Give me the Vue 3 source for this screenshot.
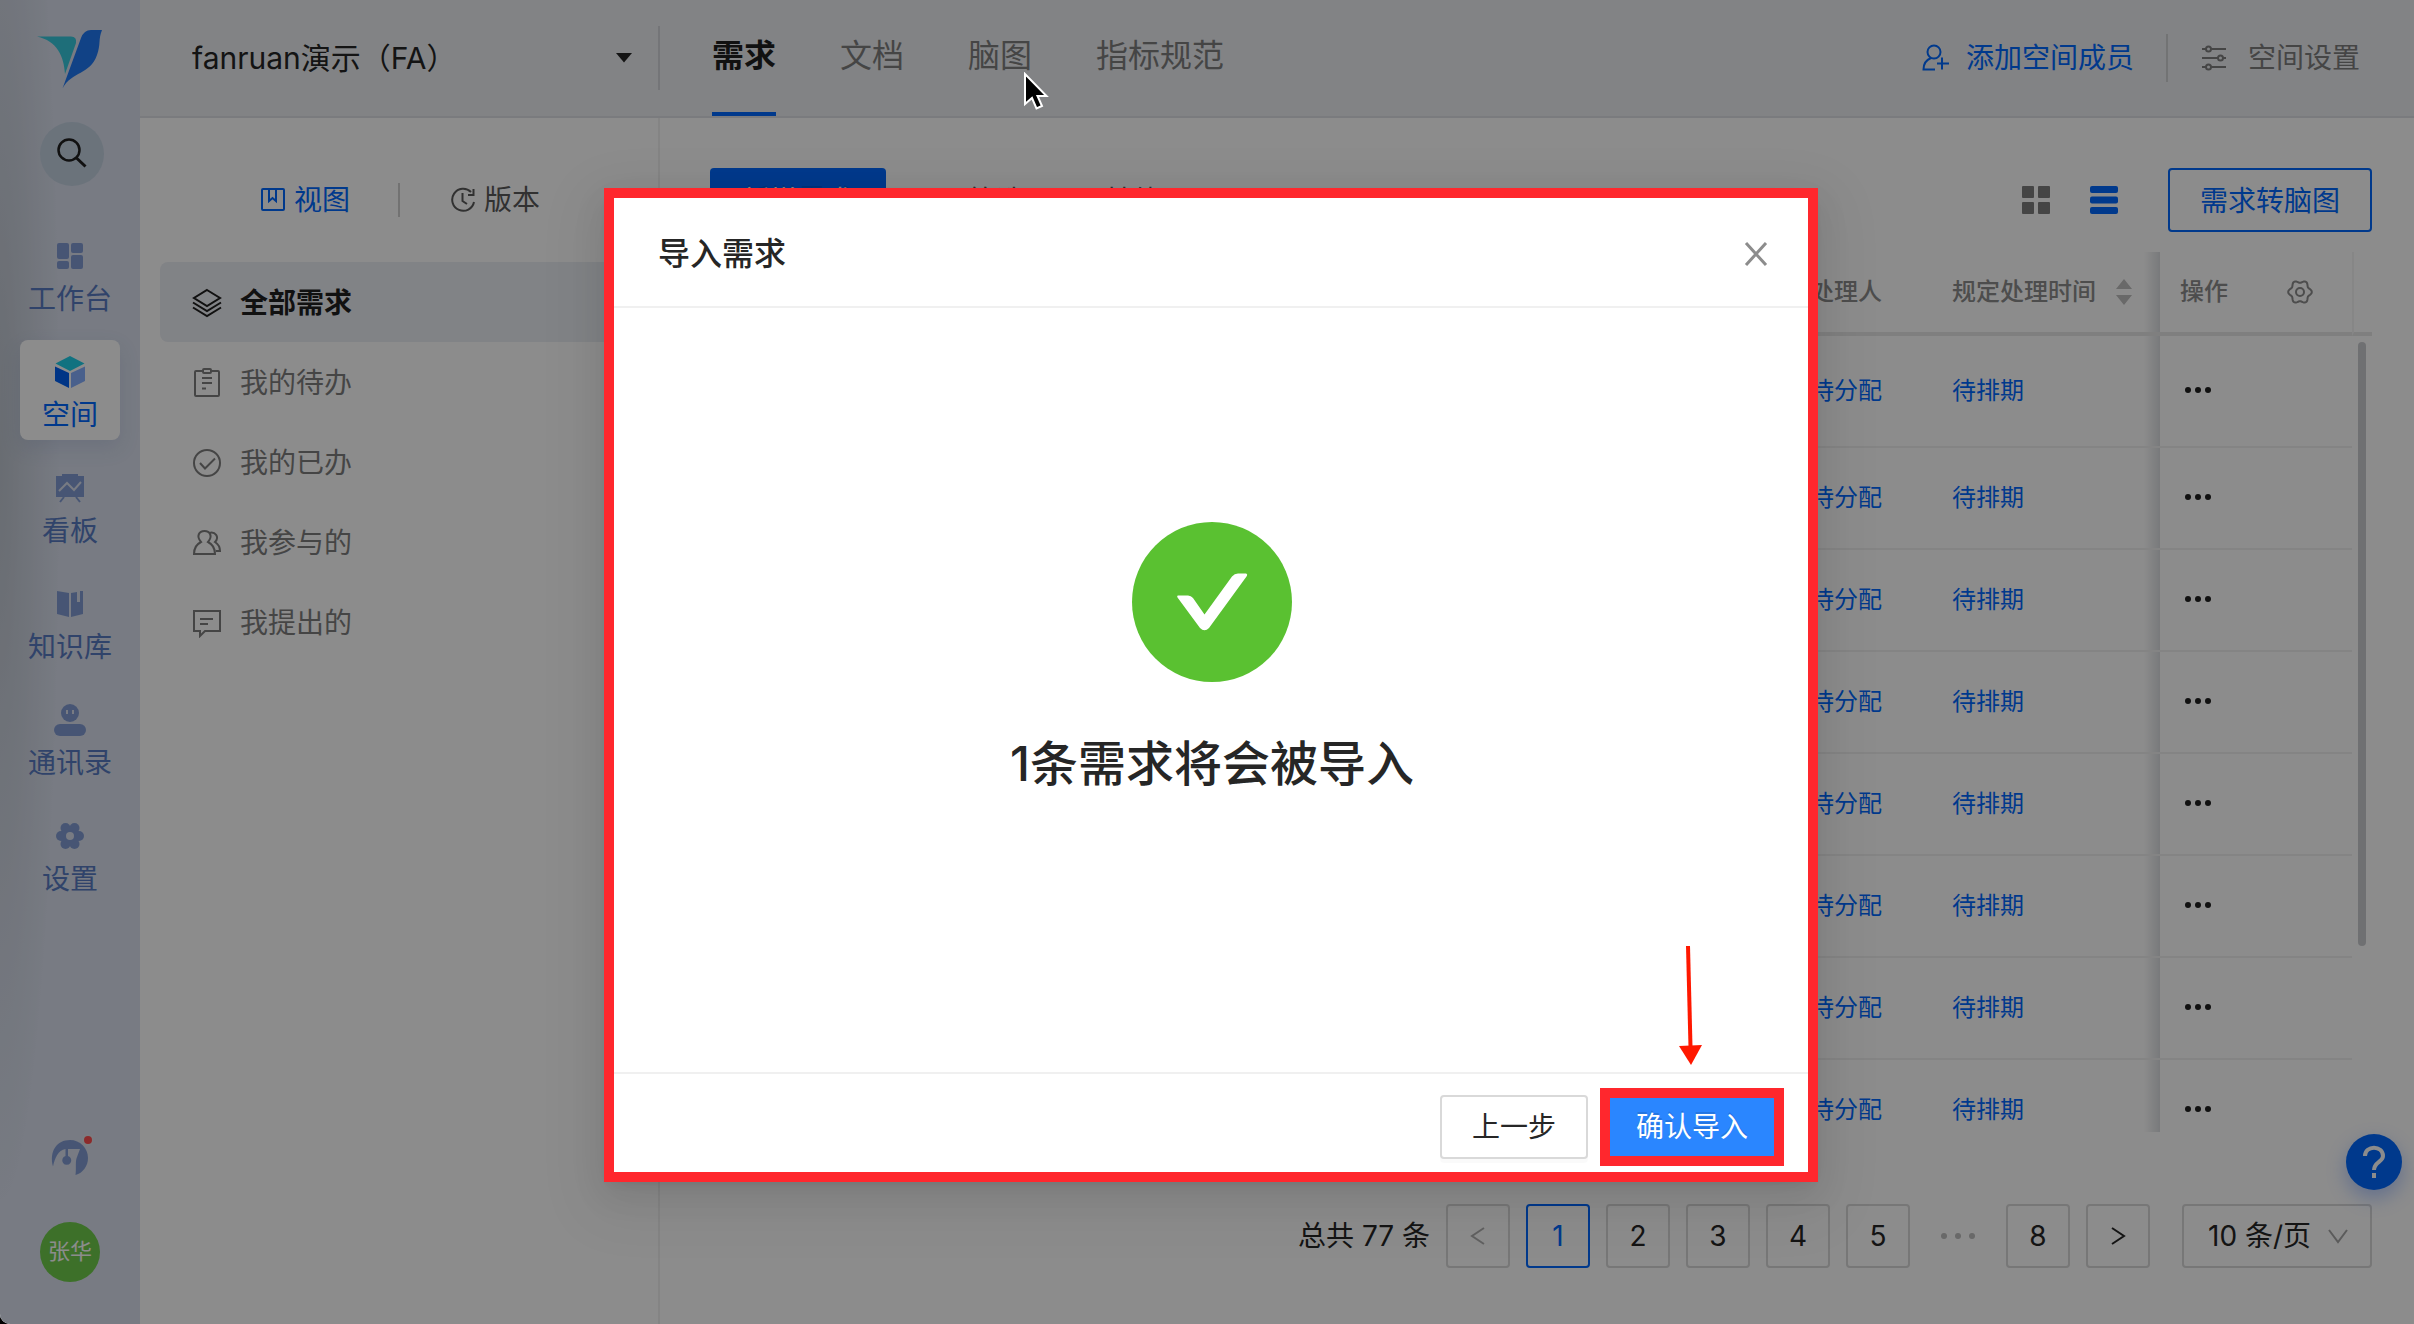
<template>
  <div class="app">
    <aside class="sidebar">
      <a href="#" class="logo" aria-label="首页">
        <svg width="66" height="60" viewBox="0 0 66 60">
          <path d="M0 6.5H34Q40 6.5 39 13L28 44C27 26 20 11 0 6.5Z" fill="#37c8dc" />
          <path d="M65 0C61 10 64 14 60 25C53 45 35 41 25.500 58.500L44 8Q47 0 54 0Z" fill="#1f78f4" />
        </svg>
      </a>
      <button class="search" aria-label="搜索">
        <svg width="32" height="32" viewBox="0 0 32 32" fill="none" stroke="#1f1f1f">
          <circle cx="13" cy="12" r="10.500" stroke-width="2.500" />
          <path d="M20 19.500L29.500 28.500" stroke-width="3" />
        </svg>
      </button>

      <nav class="side-nav">
        <a v-for="item in sideItems" :key="item.label" href="#" class="side-item" :class="{ active: item.active }">
          <svg width="32" height="32" viewBox="0 0 32 32" v-html="item.icon"></svg>
          <span>{{ item.label }}</span>
        </a>
      </nav>

      <div class="side-footer">
        <button class="assistant" aria-label="助手">
          <svg width="46" height="46" viewBox="0 0 46 46">
            <path d="M6 32.500C2 17 10 6 23 6C33 6 41 14 41 24C41 32 36 39 28.500 41C29.500 34 28 27 30 23L33 15H21V22A4.500 4.500 0 1 1 18.500 22V15C11 16 8 24 6 32.500Z" fill="#829cd4" />
            <circle cx="41" cy="6" r="6" fill="#dfe3ec" />
            <circle cx="41" cy="6" r="4" fill="#ff4d4f" />
          </svg>
        </button>
        <div class="avatar">张华</div>
      </div>
    </aside>

    <div class="workspace">
      <header class="top-bar">
        <div class="space-picker">
          <select v-model="space" aria-label="空间">
            <option>fanruan演示（FA）</option>
          </select>
          <svg width="16" height="10" viewBox="0 0 16 10"><path d="M0 0H16L8 9.500Z" fill="#262626" /></svg>
        </div>
        <nav class="tabs">
          <a v-for="tab in tabs" :key="tab" href="#" class="tab" :class="{ active: tab === activeTab }">{{ tab }}</a>
        </nav>
        <div class="top-actions">
          <a href="#" class="top-link primary">
            <svg width="28" height="28" viewBox="0 0 28 28" fill="none" stroke="currentColor" stroke-width="2">
              <circle cx="12" cy="8" r="6.500" />
              <path d="M9 14C4 16 1.500 20 1.500 25.500H13M20 13.500V25.500M15 19.500H27" />
            </svg>
            添加空间成员
          </a>
          <a href="#" class="top-link">
            <svg width="28" height="28" viewBox="0 0 28 28" fill="none" stroke="currentColor" stroke-width="2">
              <path d="M2 5H6M11 5H26M2 14H18M23 14H26M2 23H6M11 23H26" />
              <circle cx="8.500" cy="5" r="2.500" />
              <circle cx="20.500" cy="14" r="2.500" />
              <circle cx="8.500" cy="23" r="2.500" />
            </svg>
            空间设置
          </a>
        </div>
      </header>

      <div class="body">
        <section class="panel">
          <div class="panel-tabs">
            <button class="panel-tab active">
              <svg width="26" height="26" viewBox="0 0 26 26" fill="none" stroke="currentColor" stroke-width="2">
                <rect x="2" y="2" width="22" height="21" rx="1" />
                <path d="M9 2V14L12.500 11L16 14V2" />
              </svg>
              视图
            </button>
            <button class="panel-tab">
              <svg width="26" height="26" viewBox="0 0 26 26" fill="none" stroke="currentColor" stroke-width="2">
                <path d="M21 5A11 11 0 1 0 24 15M23.500 2V8H18M12.500 6V14L17 17" />
              </svg>
              版本
            </button>
          </div>
          <ul class="menu">
            <li v-for="item in menuItems" :key="item.label">
              <a href="#" class="menu-item" :class="{ active: item.active }">
                <svg width="30" height="30" viewBox="0 0 30 30" fill="none" stroke="currentColor" stroke-width="2" v-html="item.icon"></svg>
                {{ item.label }}
              </a>
            </li>
          </ul>
        </section>

        <main class="main">
          <div class="toolbar">
            <button class="btn btn-primary">新增需求</button>
            <button class="tool">
              <svg width="28" height="28" viewBox="0 0 28 28" fill="none" stroke="currentColor" stroke-width="3">
                <path d="M2 2.500H26L17 13V25L11 21V13Z" />
              </svg>
              筛选
            </button>
            <button class="tool tool-other">其他</button>
            <div class="toolbar-right">
              <button class="view-btn" aria-label="卡片视图">
                <svg width="28" height="28" viewBox="0 0 28 28" fill="currentColor">
                  <rect width="12" height="12" rx="1" /><rect x="16" width="12" height="12" rx="1" />
                  <rect y="16" width="12" height="12" rx="1" /><rect x="16" y="16" width="12" height="12" rx="1" />
                </svg>
              </button>
              <button class="view-btn active" aria-label="列表视图">
                <svg width="28" height="28" viewBox="0 0 28 28" fill="currentColor">
                  <rect width="28" height="7" rx="2" /><rect y="10.500" width="28" height="7" rx="2" /><rect y="21" width="28" height="7" rx="2" />
                </svg>
              </button>
              <button class="btn btn-outline">需求转脑图</button>
            </div>
          </div>

          <div class="table-wrap">
            <table class="table">
              <colgroup>
                <col /><col class="col-user" /><col class="col-time" /><col class="col-op" /><col class="col-gutter" />
              </colgroup>
              <thead>
                <tr>
                  <th></th>
                  <th>处理人</th>
                  <th>
                    <div class="th-sort">
                      规定处理时间
                      <svg width="16" height="26" viewBox="0 0 16 26" fill="#bfbfbf"><path d="M0 10L8 0L16 10ZM0 16H16L8 26Z" /></svg>
                    </div>
                  </th>
                  <th class="op">
                    <div class="th-op">
                      操作
                      <svg width="28" height="28" viewBox="-14 -14 28 28" fill="none" stroke="currentColor" stroke-width="2">
                        <path :d="gear" />
                        <circle r="4" />
                      </svg>
                    </div>
                  </th>
                  <th class="gutter"></th>
                </tr>
              </thead>
              <tbody>
                <tr v-for="row in rows" :key="row.id">
                  <td></td>
                  <td><a href="#">{{ row.assignee }}</a></td>
                  <td><a href="#">{{ row.schedule }}</a></td>
                  <td class="op">
                    <button class="more" aria-label="更多">
                      <svg width="28" height="8" viewBox="0 0 28 8"><circle cx="4" cy="4" r="3" /><circle cx="14" cy="4" r="3" /><circle cx="24" cy="4" r="3" /></svg>
                    </button>
                  </td>
                  <td class="gutter"></td>
                </tr>
              </tbody>
            </table>
            <div class="scroll-thumb"></div>
          </div>

          <div class="pagination">
            <span>总共 77 条</span>
            <button class="page disabled" aria-label="上一页">
              <svg width="20" height="20" viewBox="0 0 20 20"><path d="M16 2L4 10L16 18" /></svg>
            </button>
            <button v-for="n in 5" :key="n" class="page" :class="{ current: n === page }" @click="page = n">{{ n }}</button>
            <span class="ellipsis">
              <svg width="36" height="8" viewBox="0 0 36 8"><circle cx="4" cy="4" r="3" /><circle cx="18" cy="4" r="3" /><circle cx="32" cy="4" r="3" /></svg>
            </span>
            <button class="page" @click="page = 8">8</button>
            <button class="page" aria-label="下一页">
              <svg width="20" height="20" viewBox="0 0 20 20"><path d="M4 2L16 10L4 18" /></svg>
            </button>
            <div class="page-size">
              <select v-model="pageSize" aria-label="每页条数">
                <option>10 条/页</option>
              </select>
              <svg width="20" height="16" viewBox="0 0 20 16"><path d="M1 2L10 14L19 2" /></svg>
            </div>
          </div>
        </main>
      </div>
    </div>

    <button class="help" aria-label="帮助">
      <svg width="32" height="36" viewBox="0 0 32 36" fill="none" stroke="#fff" stroke-width="4">
        <path d="M7 12C7 1 25 1 25 12C25 18 16 18 16 26" />
        <path d="M16 29V34" />
      </svg>
    </button>

    <div class="mask">
      <div class="modal" role="dialog" aria-labelledby="modal-title">
        <div class="modal-header">
          <h2 id="modal-title">导入需求</h2>
          <button class="close" aria-label="关闭">
            <svg width="24" height="24" viewBox="0 0 24 24"><path d="M2 1L22 23M22 1L2 23" stroke="#8c8c8c" stroke-width="3" /></svg>
          </button>
        </div>
        <div class="modal-body">
          <svg width="160" height="160" viewBox="0 0 160 160">
            <circle cx="80" cy="80" r="80" fill="#5ac131" />
            <path d="M46 73.500H56Q59 73.500 61 76L72.500 92.500L100 54.500Q102.500 51.500 106 51.500H114Q116 52 114.500 54.500L77 106Q72.500 110.500 68 106L45.500 75.500Q44.500 73.500 46 73.500Z" fill="#fff" />
          </svg>
          <p class="result">{{ count }}条需求将会被导入</p>
        </div>
        <div class="modal-footer">
          <button class="btn btn-default">上一步</button>
          <div class="confirm-wrap">
            <svg class="arrow" width="26" height="120" viewBox="0 0 26 120">
              <path d="M10 0L12.500 101" stroke="#ff1800" stroke-width="4" />
              <path d="M1 100L24 99L13 119Z" fill="#ff1800" />
            </svg>
            <button class="confirm">确认导入</button>
          </div>
        </div>
      </div>
    </div>

    <svg class="cursor" width="28" height="42" viewBox="0 0 28 42">
      <path d="M1 2V32L8 26L12.500 36.500L18 34L13.500 24H22.500Z" fill="#000" stroke="#fff" stroke-width="2" />
    </svg>
  </div>
</template>

<script setup>
import { ref } from 'vue'

const space = ref('fanruan演示（FA）')
const tabs = ['需求', '文档', '脑图', '指标规范']
const activeTab = ref('需求')
const page = ref(1)
const pageSize = ref('10 条/页')
const count = ref(1)

const sideItems = [
  {
    label: '工作台',
    icon: '<g fill="#829cd4"><rect x="3" y="3" width="12" height="16" rx="2"/><rect x="17" y="3" width="12" height="10" rx="2"/><rect x="3" y="21" width="12" height="8" rx="2"/><rect x="17" y="15" width="12" height="14" rx="2"/></g>'
  },
  {
    label: '空间',
    active: true,
    icon: '<path d="M16 0L30.500 7.500L16 15L1.500 7.500Z" fill="#20cfea"/><path d="M1 10.500L15 17V32L1 25Z" fill="#0062f5"/><path d="M31 10.500L17 17V32L31 25Z" fill="#85b0ff"/>'
  },
  {
    label: '看板',
    icon: '<path d="M8 2H24V4H30V25H2V4H8Z" fill="#829cd4"/><path d="M5 19L13 11L20 18L27 10" fill="none" stroke="#dae0ee" stroke-width="2"/><path d="M10 25L6 30M22 25L26 30" stroke="#829cd4" stroke-width="2"/>'
  },
  {
    label: '知识库',
    icon: '<path d="M3 3L15 5V29L3 26Z" fill="#829cd4"/><path d="M17 5L23 4V14H26V3H29V26L17 29Z" fill="#829cd4"/>'
  },
  {
    label: '通讯录',
    icon: '<g fill="#829cd4"><circle cx="16" cy="9" r="9"/><rect y="20" width="32" height="12" rx="6"/></g><path d="M13 6V10M19 6V10" stroke="#dae0ee" stroke-width="2"/>'
  },
  {
    label: '设置',
    icon: '<g fill="#829cd4"><circle cx="16" cy="16" r="10"/><circle cx="7" cy="16" r="5"/><circle cx="25" cy="16" r="5"/><circle cx="11.500" cy="8" r="5"/><circle cx="20.500" cy="8" r="5"/><circle cx="11.500" cy="24" r="5"/><circle cx="20.500" cy="24" r="5"/></g><circle cx="16" cy="16" r="4" fill="#dae0ee"/>'
  }
]

const menuItems = [
  {
    label: '全部需求',
    active: true,
    icon: '<path d="M15 2L28 10L15 18L2 10ZM1 14.500L15 23L29 14.500M1 19.500L15 28L29 19.500"/>'
  },
  {
    label: '我的待办',
    icon: '<rect x="3" y="3" width="24" height="25" rx="1"/><rect x="11" y="1" width="8" height="4" rx="1" fill="#fff"/><path d="M10 10H20M10 15H20M10 20.500H14"/>'
  },
  {
    label: '我的已办',
    icon: '<circle cx="15" cy="15" r="13"/><path d="M8 15L13 20.500L23 10.500"/>'
  },
  {
    label: '我参与的',
    icon: '<path d="M9 14C4 8 7 3 12.500 3C18 3 21 8 16 14C20 16 23 20 23 26H2C2 20 5 16 9 14Z"/><path d="M17 5C23 3 28 9 23 14C26 16 28 19 28 23H24"/>'
  },
  {
    label: '我提出的',
    icon: '<path d="M2 3H28V23H13L8 28V23H2ZM8 11H21M8 16H16"/>'
  }
]

const rows = Array.from({ length: 8 }, (_, i) => ({ id: i + 1, assignee: '待分配', schedule: '待排期' }))

// six-lobed outline of the column settings icon
const gear = (() => {
  const points = []
  for (let i = 0; i < 72; i++) {
    const a = (i * Math.PI) / 36
    const r = 10.5 + 1.3 * Math.cos(6 * a)
    points.push(`${(r * Math.cos(a)).toFixed(2)} ${(r * Math.sin(a)).toFixed(2)}`)
  }
  return `M${points.join('L')}Z`
})()
</script>

<style>
body { margin: 0; background: #000; }
</style>

<style scoped>
/* BASE */
* { box-sizing: border-box; }
.app {
  position: relative; display: flex; height: 100vh; overflow: hidden; border-bottom-left-radius: 10px;
  background: #fff; color: #262626; font-family: Inter, "Noto Sans CJK SC", sans-serif; font-size: 28px; line-height: 40px;
}
a { color: inherit; text-decoration: none; }
button, select { font: inherit; color: inherit; border: none; background: none; padding: 0; margin: 0; }
select { appearance: none; outline: none; }
svg { display: block; flex: none; }

/* SIDEBAR */
.sidebar {
  flex: none; width: 140px; display: flex; flex-direction: column; align-items: center; padding: 30px 0 42px;
  background: radial-gradient(ellipse 60px 760px at 0 450px, rgba(50, 60, 50, 0.16), rgba(50, 60, 50, 0)) #dae0ee;
}
.logo { height: 58px; }
.search { display: flex; align-items: center; justify-content: center; width: 64px; height: 64px; margin: 34px 0 0 4px; border-radius: 50%; background: #c3d1e1; }
.side-nav { display: flex; flex-direction: column; gap: 16px; margin-top: 38px; }
.side-item { display: flex; flex-direction: column; align-items: center; gap: 7px; width: 100px; height: 100px; padding-top: 16px; border-radius: 8px; color: #587bc2; }
.side-item.active { background: #fff; color: #0069ff; box-shadow: 0 8px 20px rgba(80, 110, 170, 0.15); }
.side-footer { display: flex; flex-direction: column; align-items: center; margin-top: auto; }
.assistant { margin-bottom: 42px; }
.avatar { width: 60px; height: 60px; border-radius: 50%; background: #70cc4c; color: #fff; font-size: 22px; line-height: 58px; text-align: center; }

/* TOP BAR */
.workspace { flex: 1; min-width: 0; display: flex; flex-direction: column; }
.top-bar { flex: none; display: flex; align-items: center; height: 118px; background: #edeff3; border-bottom: 2px solid #dfe1e5; }
.space-picker { position: relative; display: flex; align-items: center; flex: none; width: 520px; height: 64px; padding: 0 26px 0 52px; border-right: 2px solid #d4d6da; font-size: 30px; }
.space-picker select { flex: 1; }
.tabs { display: flex; gap: 64px; margin-left: 52px; font-size: 32px; }
.tab { display: flex; align-items: center; height: 116px; padding-bottom: 2px; border-bottom: 4px solid transparent; border-top: 2px solid transparent; color: #7f7f7f; }
.tab.active { color: #1f1f1f; font-weight: 700; border-bottom-color: #0069ff; }
.top-actions { display: flex; margin-left: auto; padding-right: 54px; }
.top-link { display: flex; align-items: center; gap: 20px; height: 48px; color: #7f7f7f; }
.top-link.primary { gap: 16px; color: #0069ff; padding-right: 32px; margin-right: 32px; border-right: 2px solid #cfd1d4; }

/* LEFT PANEL */
.body { flex: 1; min-height: 0; display: flex; }
.panel { flex: none; width: 520px; padding: 62px 18px 0 20px; border-right: 2px solid #f0f0f0; }
.panel-tabs { display: flex; align-items: center; height: 40px; padding-left: 100px; }
.panel-tab { display: flex; align-items: center; gap: 8px; height: 34px; color: #595959; }
.panel-tab.active { color: #0069ff; padding-right: 48px; margin-right: 50px; border-right: 2px solid #d0d0d0; }
.menu { list-style: none; margin: 42px 0 0; padding: 0; }
.menu-item { display: flex; align-items: center; gap: 18px; height: 80px; padding: 2px 0 0 32px; border-radius: 8px; color: #7f7f7f; }
.menu-item.active { background: #ecEEf4; color: #1f1f1f; font-weight: 700; }

/* MAIN */
.main { flex: 1; min-width: 0; display: flex; flex-direction: column; padding: 50px 42px 56px 50px; }
.toolbar { flex: none; display: flex; align-items: center; height: 64px; }
.btn { height: 64px; padding: 2px 32px 0; border-radius: 4px; }
.btn-primary { background: #0069ff; color: #fff; text-shadow: 0 -2px 0 rgba(0, 0, 0, 0.12); }
.btn-outline { padding: 2px 30px 0; border: 2px solid #0069ff; color: #0069ff; }
.tool { display: flex; align-items: center; gap: 12px; margin-left: 42px; padding-top: 2px; color: #595959; }
.tool-other { margin-left: 80px; }
.toolbar-right { display: flex; align-items: center; margin-left: auto; }
.view-btn { margin-right: 40px; color: #7f7f7f; }
.view-btn.active { margin-right: 50px; color: #0069ff; }

/* TABLE */
.table-wrap { position: relative; flex: 1; min-height: 0; margin-top: 20px; overflow: hidden; font-size: 24px; line-height: 32px; }
.table { width: 100%; table-layout: fixed; border-spacing: 0; }
.col-user { width: 142px; }
.col-time { width: 224px; }
.col-op { width: 192px; }
.col-gutter { width: 20px; }
.table th { height: 84px; padding: 0 16px; border-bottom: 4px solid #e8e8e8; color: #8c8c8c; font-weight: 500; text-align: left; }
.th-sort { display: flex; align-items: center; gap: 20px; }
.th-op { display: flex; align-items: center; justify-content: space-between; }
.table td { height: 102px; padding: 0 16px; border-bottom: 2px solid #f0f0f0; color: #0069ff; }
.table tbody tr:first-child td { height: 112px; }
.table .op { position: relative; padding: 0 38px 0 20px; }
.table .op::before { content: ""; position: absolute; left: -16px; top: 0; bottom: 0; width: 16px; background: linear-gradient(to left, rgba(60, 70, 85, 0.18), rgba(60, 70, 85, 0)); }
.table th.gutter { padding: 0; border-left: 2px solid #f5f5f5; }
.table td.gutter { padding: 0; border-bottom: none; }
.more { display: block; padding: 0 0 2px 4px; }
.more svg { fill: #1f1f1f; }
.scroll-thumb { position: absolute; top: 90px; right: 6px; width: 8px; height: 604px; border-radius: 4px; background: #cbcdd0; }

/* PAGINATION */
.pagination { flex: none; display: flex; align-items: center; justify-content: flex-end; gap: 16px; margin-top: 72px; }
.page, .page-size { display: flex; align-items: center; justify-content: center; width: 64px; height: 64px; border: 2px solid #d9d9d9; border-radius: 4px; }
.page svg { fill: none; stroke: currentColor; stroke-width: 2; }
.page.disabled { color: #b0b0b0; }
.page.current { border-color: #0069ff; color: #0069ff; }
.ellipsis { display: flex; align-items: center; justify-content: center; width: 64px; }
.ellipsis svg { fill: #bfbfbf; }
.page-size { width: 190px; margin-left: 16px; padding: 0 22px 0 24px; }
.page-size select { flex: 1; min-width: 0; }
.page-size svg { fill: none; stroke: #a6a6a6; stroke-width: 2; }

/* HELP */
.help { position: absolute; right: 12px; bottom: 134px; display: flex; align-items: center; justify-content: center; width: 56px; height: 56px; border-radius: 50%; background: #0069ff; box-shadow: 0 8px 20px rgba(0, 80, 255, 0.3); }

/* MODAL */
.mask { position: absolute; inset: 0; display: flex; justify-content: center; align-items: flex-start; padding: 188px 0 0 8px; background: rgba(0, 0, 0, 0.45); }
.modal {
  display: flex; flex-direction: column; width: 1214px; border: 10px solid #ff272d; background: #fff;
  box-shadow: 0 6px 12px -8px rgba(0, 0, 0, 0.12), 0 12px 32px rgba(0, 0, 0, 0.08), 0 18px 56px 16px rgba(0, 0, 0, 0.05);
}
.modal-header { display: flex; align-items: center; justify-content: space-between; height: 110px; padding: 4px 40px 0 44px; border-bottom: 2px solid #f0f0f0; }
.modal-header h2 { margin: 0; font-size: 32px; font-weight: 500; line-height: 44px; }
.modal-body { display: flex; flex-direction: column; align-items: center; height: 764px; padding: 214px 0 0 2px; }
.result { margin: 50px 0 0; font-size: 48px; font-weight: 500; line-height: 64px; }
.modal-footer { display: flex; align-items: center; justify-content: flex-end; gap: 12px; padding: 14px 24px 6px; border-top: 2px solid #f0f0f0; }
.btn-default { border: 2px solid #d9d9d9; padding: 0 30px; background: #fff; box-shadow: 0 4px 0 rgba(0, 0, 0, 0.02); }
.confirm-wrap { position: relative; padding: 10px; background: #ff272d; }
.confirm { display: block; width: 164px; height: 58px; background: #2a86ff; color: #fff; text-shadow: 0 -2px 0 rgba(0, 0, 0, 0.12); }
.arrow { position: absolute; left: 78px; bottom: calc(100% + 22px); }
.cursor { position: absolute; left: 1024px; top: 72px; }
</style>
